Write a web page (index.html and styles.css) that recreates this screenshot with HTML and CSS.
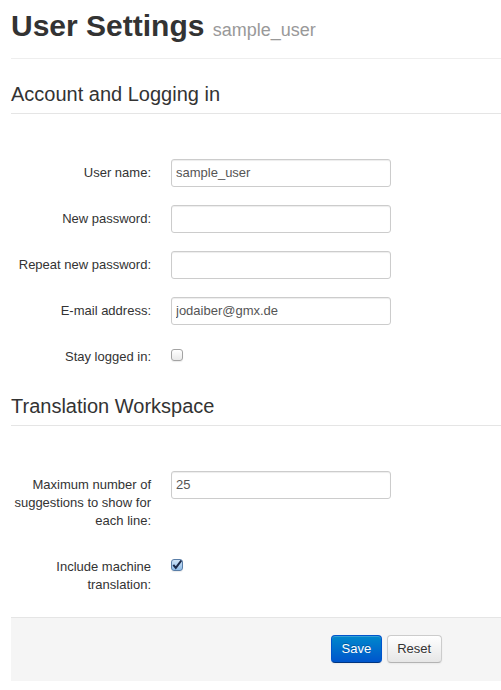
FILE: index.html
```html
<!DOCTYPE html>
<html lang="en">
<head>
<meta charset="utf-8">
<title>User Settings</title>
<link rel="stylesheet" href="styles.css">
</head>
<body>
<div class="page-header">
  <h1>User Settings <small>sample_user</small></h1>
</div>
<form class="form-horizontal">
  <fieldset>
    <legend>Account and Logging in</legend>
    <div class="control-group">
      <label class="control-label" for="username">User name:</label>
      <div class="controls"><input class="text-input" type="text" id="username" value="sample_user"></div>
    </div>
    <div class="control-group">
      <label class="control-label" for="pw1">New password:</label>
      <div class="controls"><input class="text-input" type="password" id="pw1"></div>
    </div>
    <div class="control-group">
      <label class="control-label" for="pw2">Repeat new password:</label>
      <div class="controls"><input class="text-input" type="password" id="pw2"></div>
    </div>
    <div class="control-group">
      <label class="control-label" for="email">E-mail address:</label>
      <div class="controls"><input class="text-input" type="text" id="email" value="jodaiber@gmx.de"></div>
    </div>
    <div class="control-group">
      <label class="control-label" for="stay">Stay logged in:</label>
      <div class="controls"><input class="check" type="checkbox" id="stay"></div>
    </div>
  </fieldset>
  <fieldset>
    <legend>Translation Workspace</legend>
    <div class="control-group">
      <label class="control-label" for="maxsug">Maximum number of suggestions to show for each line:</label>
      <div class="controls"><input class="text-input" type="text" id="maxsug" value="25"></div>
    </div>
    <div class="control-group">
      <label class="control-label" for="mt">Include machine translation:</label>
      <div class="controls"><input class="check" type="checkbox" id="mt" checked></div>
    </div>
  </fieldset>
  <div class="form-actions">
    <button type="submit" class="btn btn-primary">Save</button>
    <button type="reset" class="btn">Reset</button>
  </div>
</form>
</body>
</html>
```
FILE: styles.css
```css
html, body {
  margin: 0;
  padding: 0;
  overflow: hidden;
}
body {
  padding-left: 11px;
  font-family: "Liberation Sans", Arial, sans-serif;
  font-size: 13px;
  line-height: 18px;
  color: #333;
  background: #fff;
}
.page-header {
  padding: 8px 0 14px;
  border-bottom: 1px solid #eee;
  margin: 0 0 18px;
}
.page-header h1 {
  margin: 0;
  font-size: 30px;
  line-height: 36px;
  font-weight: bold;
  color: #333;
  white-space: nowrap;
}
.page-header small {
  font-size: 18px;
  line-height: 1;
  font-weight: normal;
  color: #999;
}
.form-horizontal {
  margin: 0;
}
fieldset {
  margin: 0;
  padding: 0;
  border: 0;
  min-width: 0;
}
legend {
  display: block;
  width: 100%;
  box-sizing: border-box;
  padding: 0 0 2px;
  margin: 0 0 45px;
  font-size: 20px;
  line-height: 34px;
  color: #333;
  border-bottom: 1px solid #e5e5e5;
}
.control-group {
  display: flex;
  align-items: flex-start;
  margin-bottom: 18px;
}
.control-label {
  flex: 0 0 140px;
  width: 140px;
  text-align: right;
  padding: 5px 0;
  color: #333;
}
.controls {
  margin-left: 20px;
}
.text-input {
  box-sizing: content-box;
  display: block;
  margin: 0;
  width: 210px;
  height: 18px;
  padding: 4px;
  font-family: "Liberation Sans", Arial, sans-serif;
  font-size: 13px;
  line-height: 18px;
  color: #555;
  border: 1px solid #ccc;
  border-radius: 3px;
  background: #fff;
  box-shadow: inset 0 1px 1px rgba(0, 0, 0, 0.075);
  outline: none;
}
.check {
  appearance: none;
  -webkit-appearance: none;
  display: block;
  box-sizing: border-box;
  width: 12px;
  height: 12px;
  margin: 6px 0 0;
  border: 1px solid #a3a3a3;
  border-radius: 3px;
  background: linear-gradient(#ffffff, #e9e9e9);
  box-shadow: 0 1px 1px rgba(0, 0, 0, 0.08);
}
.check:checked {
  border-color: #5a7ea8;
  background:
    url("data:image/svg+xml,%3Csvg xmlns='http://www.w3.org/2000/svg' viewBox='0 0 12 12'%3E%3Cpath d='M2.3 5.8L4.8 8.8L10.6 1.2' fill='none' stroke='%231c2b4a' stroke-width='2'/%3E%3C/svg%3E") center / 12px 12px no-repeat,
    linear-gradient(#cfe3f6, #8fbde9);
}
.form-actions {
  display: flex;
  gap: 5px;
  margin: 0 0 18px;
  padding: 17px 20px 18px 320px;
  background: #f5f5f5;
  border-top: 1px solid #e5e5e5;
}
.btn {
  display: inline-block;
  margin: 0;
  padding: 4px 9.5px;
  font-family: "Liberation Sans", Arial, sans-serif;
  font-size: 13px;
  line-height: 18px;
  color: #333;
  text-shadow: 0 1px 1px rgba(255, 255, 255, 0.75);
  background: linear-gradient(#ffffff, #e6e6e6);
  border: 1px solid #ccc;
  border-bottom-color: #b3b3b3;
  border-radius: 4px;
  box-shadow: inset 0 1px 0 rgba(255, 255, 255, 0.2), 0 1px 2px rgba(0, 0, 0, 0.05);
  cursor: pointer;
}
.btn-primary {
  color: #fff;
  text-shadow: 0 -1px 0 rgba(0, 0, 0, 0.25);
  background: linear-gradient(#0088cc, #0055cc);
  border-color: #0055cc #0055cc #003580;
}
```
